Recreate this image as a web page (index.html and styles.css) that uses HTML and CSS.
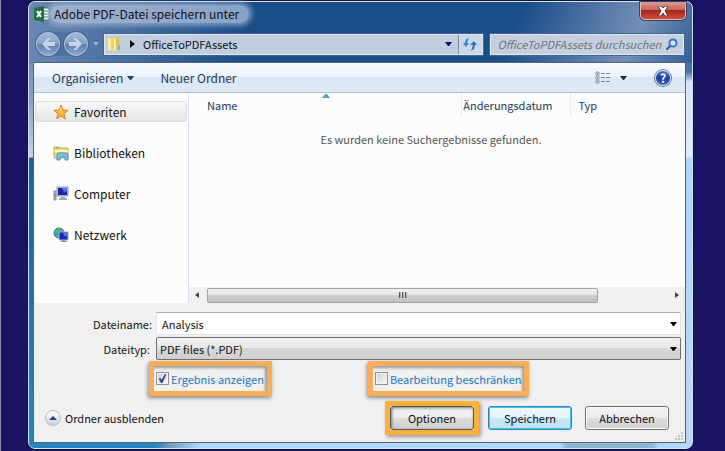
FILE: index.html
```html
<!DOCTYPE html>
<html lang="de">
<head>
    <meta charset="UTF-8">
    <meta name="viewport" content="width=device-width, initial-scale=1.0">
    <title>Adobe PDF-Datei speichern unter</title>
    <link rel="stylesheet" href="styles.css">
</head>
<body>
    <div class="window">
        <header class="titlebar">
            <svg class="app-icon" width="16" height="16" viewBox="0 0 16 16">
                <path d="M9 2h6v12H9z" fill="#fff" stroke="#2a7a4b"/>
                <path d="M11 4v2M11 7v2M11 10v2M13 4v2M13 7v2M13 10v2" stroke="#2a7a4b"/>
                <path d="M0 2l10-2v16L0 14z" fill="#1e7145"/>
                <path d="M3 5l4 6M7 5l-4 6" stroke="#fff" stroke-width="2"/>
            </svg>
            <h1 class="title">Adobe PDF-Datei speichern unter</h1>
            <button class="close" type="button" aria-label="Schließen">
                <svg width="12" height="10" viewBox="0 0 12 10">
                    <path d="M1 0h3l2 2 2-2h3L8 5l3 5H8L6 7l-2 3H1l3-5z" fill="#fff" stroke="#5b3c44"/>
                </svg>
            </button>
        </header>

        <nav class="navbar">
            <div class="history">
                <button class="round" type="button" aria-label="Zurück">
                    <svg width="16" height="14" viewBox="0 0 16 14"><path d="M8 1L2 7l6 6h3L7 9h8V5H7l4-4z" fill="#c6d5ea"/></svg>
                </button>
                <button class="round" type="button" aria-label="Vorwärts">
                    <svg width="16" height="14" viewBox="0 0 16 14"><path d="M8 1l6 6-6 6H5l4-4H1V5h8L5 1z" fill="#c6d5ea"/></svg>
                </button>
            </div>
            <svg class="history-arrow" width="6" height="4" viewBox="0 0 6 4"><path d="M0 0h6L3 4z" fill="#9db6da"/></svg>
            <div class="address">
                <button class="crumb" type="button">
                    <svg width="14" height="16" viewBox="0 0 14 16">
                        <path d="M1 2l4-1 3 1v13l-5-1-2-1z" fill="#f1d56c"/>
                        <path d="M1 2l3 1v12l-3-2z" fill="#fbeaa0"/>
                        <path d="M7 2l4-1 1 1v12H7z" fill="#e5bd49"/>
                        <path d="M7 3l2-1v13l-2-1z" fill="#fff0ac"/>
                        <path d="M11 9h2v5h-2z" fill="#7fb2dd"/>
                    </svg>
                    <svg class="crumb-arrow" width="5" height="8" viewBox="0 0 5 8"><path d="M0 0l5 4-5 4z" fill="#111"/></svg>
                    <span>OfficeToPDFAssets</span>
                </button>
                <button class="address-drop" type="button" aria-label="Verlauf">
                    <svg width="7" height="4" viewBox="0 0 7 4"><path d="M0 0h7L4 4H3z" fill="#0c0c66"/></svg>
                </button>
                <button class="refresh" type="button" aria-label="Aktualisieren">
                    <svg width="14" height="13" viewBox="0 0 14 13">
                        <path d="M6 0L3 1 2 5H0l3 4 3-4H4l1-3z" fill="#2e8ad2"/>
                        <path d="M8 13l3-2 1-4h2l-3-4-4 4h3l-1 3z" fill="#3572c0"/>
                    </svg>
                </button>
            </div>
            <div class="search">
                <input class="search-input" type="text" aria-label="Suchen" placeholder="OfficeToPDFAssets durchsuchen">
                <svg width="12" height="12" viewBox="0 0 12 12">
                    <path d="M5 7l-4 4" stroke="#2456ae" stroke-width="2" stroke-linecap="round"/>
                    <circle cx="7" cy="5" r="3.5" fill="#d9ebfa" stroke="#3479cc" stroke-width="2"/>
                </svg>
            </div>
        </nav>

        <main class="panel">
            <div class="toolbar">
                <button class="tool" type="button">Organisieren
                    <svg width="7" height="4" viewBox="0 0 7 4"><path d="M0 0h7L4 4H3z" fill="#1c4668"/></svg>
                </button>
                <button class="tool" type="button">Neuer Ordner</button>
                <div class="tool-right">
                    <button class="tool view" type="button" aria-label="Ansicht">
                        <svg width="15" height="13" viewBox="0 0 15 13">
                            <path d="M1 1h3v3H1zM1 5h3v3H1zM1 9h3v3H1z" fill="#fff" stroke="#8d98ac"/>
                            <path d="M2 2h1v1H2zM2 10h1v1H2z" fill="#5470a0"/>
                            <path d="M2 6h1v1H2z" fill="#e2413c"/>
                            <path d="M6 2.500h4M11 2.500h4M6 6.500h4M11 6.500h4M6 10.500h4M11 10.500h4" stroke="#78859f"/>
                        </svg>
                        <svg width="7" height="4" viewBox="0 0 7 4"><path d="M0 0h7L4 4H3z" fill="#15394f"/></svg>
                    </button>
                    <button class="help" type="button" aria-label="Hilfe">?</button>
                </div>
            </div>

            <div class="browser">
                <div class="sidebar">
                    <a class="place selected" href="#">
                        <svg width="16" height="16" viewBox="0 0 16 16">
                            <path d="M8 1l2 5 5 .4-4 3.400 1.400 5L8 12l-4.400 2.800L5 9.800 1 6.400 6 6z" fill="#fdb53e" stroke="#e07f2a" stroke-linejoin="round"/>
                            <path d="M8 3l1 4H6z" fill="#ffe79a"/>
                        </svg>
                        Favoriten
                    </a>
                    <a class="place" href="#">
                        <svg width="16" height="16" viewBox="0 0 16 16">
                            <path d="M1 2h5l1 1h8v10H1z" fill="#efd575" stroke="#cfae50"/>
                            <path d="M2 5h13v2H2z" fill="#fff4bd"/>
                            <path d="M3 3h3" stroke="#5cb050"/>
                            <path d="M4 15V10q0-2 2-2h6q3 0 3 3v4h-3v-2q0-1-1-1H8q-1 0-1 1v2z" fill="#76c2e8" stroke="#4693c4"/>
                        </svg>
                        Bibliotheken
                    </a>
                    <a class="place" href="#">
                        <svg width="16" height="16" viewBox="0 0 16 16">
                            <path d="M1 5h2v9H1z" fill="#b8bcc2" stroke="#858a90"/>
                            <path d="M2 8v3" stroke="#3b9f48"/>
                            <path d="M4 1h11v9H4z" fill="#c9ced8" stroke="#9096a6"/>
                            <path d="M5 2h9v7H5z" fill="#1620a8"/>
                            <path d="M9 2h5v3l-3 2z" fill="#4a73e6"/>
                            <path d="M8 11h4v1h2v2H6v-2h2z" fill="#a3a8b1"/>
                        </svg>
                        Computer
                    </a>
                    <a class="place" href="#">
                        <svg width="16" height="16" viewBox="0 0 16 16">
                            <circle cx="6" cy="6" r="5" fill="#3598d8" stroke="#2a75a8"/>
                            <path d="M2 4l3-3 3 1-2 3-3 1zM3 8l3-1 1 3-2 1z" fill="#58bd55"/>
                            <path d="M6 5h9v8H6z" fill="#1926b8" stroke="#aab2c6"/>
                            <path d="M10 6h4v3l-2 1z" fill="#4b78e8"/>
                            <path d="M9 13h3v1h2v1H8v-1h1z" fill="#8b93a5"/>
                        </svg>
                        Netzwerk
                    </a>
                </div>
                <div class="files">
                    <table class="columns">
                        <thead>
                            <tr>
                                <th class="col-name">Name
                                    <svg class="sort" width="8" height="4" viewBox="0 0 8 4"><path d="M0 4l3-4h2l3 4z" fill="#5b9fc0"/></svg>
                                </th>
                                <th class="col-date">Änderungsdatum</th>
                                <th class="col-type">Typ</th>
                            </tr>
                        </thead>
                        <tbody>
                            <tr>
                                <td class="empty" colspan="3">Es wurden keine Suchergebnisse gefunden.</td>
                            </tr>
                        </tbody>
                    </table>
                    <div class="scrollbar">
                        <svg width="4" height="6" viewBox="0 0 4 6"><path d="M4 0v6L0 3z" fill="#444"/></svg>
                        <div class="track">
                            <div class="thumb"><i></i><i></i><i></i></div>
                        </div>
                        <svg width="4" height="6" viewBox="0 0 4 6"><path d="M0 0l4 3-4 3z" fill="#444"/></svg>
                    </div>
                </div>
            </div>

            <form class="footer">
                <div class="fields">
                    <label for="filename">Dateiname:</label>
                    <div class="combo">
                        <input class="field" type="text" id="filename" value="Analysis">
                        <svg class="combo-arrow" width="7" height="4" viewBox="0 0 7 4"><path d="M0 0h7L4 4H3z"/></svg>
                    </div>
                    <label class="type-label" for="filetype">Dateityp:</label>
                    <div class="combo">
                        <select class="field type" id="filetype">
                            <option>PDF files (*.PDF)</option>
                        </select>
                        <svg class="combo-arrow" width="7" height="4" viewBox="0 0 7 4"><path d="M0 0h7L4 4H3z"/></svg>
                    </div>
                </div>

                <div class="options">
                    <label class="option">
                        <input class="check" type="checkbox" checked>
                        Ergebnis anzeigen
                    </label>
                    <label class="option">
                        <input class="check" type="checkbox">
                        Bearbeitung beschränken
                    </label>
                </div>

                <div class="actions">
                    <button class="hide-folders" type="button">
                        <span class="fold">
                            <svg width="8" height="4" viewBox="0 0 8 4"><path d="M0 4l4-4 4 4z" fill="#27418f"/></svg>
                        </span>
                        Ordner ausblenden
                    </button>
                    <div class="highlight">
                        <button class="btn pressed" type="button">Optionen</button>
                    </div>
                    <button class="btn primary" type="submit">Speichern</button>
                    <button class="btn cancel" type="button">Abbrechen</button>
                </div>
                <svg class="grip" width="9" height="9" viewBox="0 0 9 9">
                    <path d="M7 0h2v2H7zM7 3h2v2H7zM7 6h2v2H7zM4 3h2v2H4zM4 6h2v2H4zM1 6h2v2H1z" fill="#c4c4c4"/>
                </svg>
            </form>
        </main>
    </div>
</body>
</html>
```

FILE: styles.css
```css
* {
    box-sizing: border-box;
}

body {
    margin: 0;
    padding: 1px 32px 0 27px;
    border-left: 1px solid #8f8daa;
    min-height: 100vh;
    background-color: #1b1464;
    font-family: "Noto Sans CJK SC", "Noto Sans", sans-serif;
    font-size: 12px;
    line-height: 18px;
    color: #111;
}

button,
input,
select {
    margin: 0;
    padding: 0;
    border: none;
    background: none;
    font: inherit;
    color: inherit;
}

svg {
    flex: none;
}

.window {
    padding: 0 6px 5px 4px;
    border: 1px solid #d5e4f4;
    border-radius: 7px;
    background:
        linear-gradient(to right, rgba(126, 150, 190, 0.8), rgba(126, 150, 190, 0) 32%) 0 0 / 100% 61px no-repeat,
        linear-gradient(115deg, rgba(126, 150, 190, 0) 72%, rgba(126, 150, 190, 0.9) 90%, rgba(60, 105, 160, 0.6)) 0 0 / 100% 61px no-repeat,
        linear-gradient(#1b4e88, #1b4e88) 0 0 / 100% 61px no-repeat,
        linear-gradient(#557eaf, #7f9cc4 90px, #c3d3e8 155px, #1d62a0 156px, #2785bf) 0 0 / 50% 98% no-repeat,
        linear-gradient(#3a6598, #4a74a8 70px, #d3e6fa 80px, #e0ecfa 155px, #aed5fb 156px, #b5d7fa) 100% 0 / 50% 98% no-repeat,
        linear-gradient(to right, #2684bd 19%, #6f9ab9 21%, #b5d7fa 26%, #b5d7fa 80%, #8fb5cf 81%, #8fb5cf 94%, #b5d7fa 95%);
    box-shadow: 0 0 0 1px #0b1638;
}

.titlebar {
    display: flex;
    align-items: center;
    height: 24px;
    padding-left: 1px;
}

.title {
    margin: 0;
    padding: 0 10px 0 4px;
    border-radius: 10px;
    background-color: rgba(175, 192, 222, 0.75);
    box-shadow: 0 0 5px 3px rgba(175, 192, 222, 0.6);
    font-size: 12px;
    font-weight: normal;
}

.close {
    display: flex;
    align-items: center;
    justify-content: center;
    align-self: flex-start;
    width: 46px;
    height: 18px;
    margin-left: auto;
    border: 1px solid #e3b9b8;
    border-top: none;
    border-radius: 0 0 5px 5px;
    background: linear-gradient(#d79b94, #c4635a 48%, #a92718 50%, #cc4f3c);
    box-shadow: 0 0 0 1px #3b3f60;
}

.navbar {
    display: flex;
    align-items: center;
    height: 36px;
    padding: 0 2px 0 3px;
}

.history {
    display: flex;
    gap: 4px;
    border-radius: 12px;
    background-color: rgba(60, 95, 150, 0.4);
}

.round {
    display: flex;
    align-items: center;
    justify-content: center;
    width: 24px;
    height: 24px;
    border: 1px solid #b5c6df;
    border-radius: 50%;
    background: linear-gradient(#a4b7d3, #8ba2c6 48%, #5f7dab 50%, #8ba7cd);
    box-shadow: 0 0 0 1px #46648f;
}

.history-arrow {
    margin: 0 5px;
}

.address,
.search {
    display: flex;
    align-items: center;
    height: 21px;
    border: 1px solid #dfe8f2;
    background-color: #c0cedf;
    box-shadow: 0 0 0 1px #42648f;
}

.address {
    flex: 1;
    margin-right: 7px;
}

.crumb {
    display: flex;
    align-items: center;
    flex: 1;
    padding-left: 2px;
    font-size: 11px;
}

.crumb-arrow {
    margin: 0 8px 0 9px;
}

.address-drop {
    display: flex;
    align-items: center;
    justify-content: center;
    width: 19px;
    height: 19px;
}

.refresh {
    display: flex;
    align-items: center;
    justify-content: center;
    width: 24px;
    height: 19px;
    border-left: 1px solid #7d8b9f;
    background-color: #cbd8e8;
}

.search {
    width: 30%;
    padding: 0 5px 0 7px;
    background-color: #c6cfdd;
}

.search-input {
    flex: 1;
    min-width: 0;
    height: 19px;
    font-size: 11px;
    font-style: italic;
}

.search-input::placeholder {
    color: #6e737c;
    opacity: 1;
}

.panel {
    border: 1px solid #4a6580;
    background-color: #f0f0f0;
}

.toolbar {
    display: flex;
    align-items: center;
    gap: 26px;
    height: 30px;
    padding: 0 14px 0 18px;
    border-bottom: 1px solid #b4c1d5;
    background: linear-gradient(#fafcff, #eaf2fc 48%, #dce6f4 50%, #dde8f5);
}

.tool {
    display: flex;
    align-items: center;
    gap: 4px;
    color: #1e395b;
}

.tool-right {
    display: flex;
    align-items: center;
    gap: 28px;
    margin-left: auto;
}

.view {
    gap: 10px;
}

.help {
    width: 16px;
    height: 16px;
    border: 1px solid #cfd6e6;
    border-radius: 50%;
    background: linear-gradient(#5a7cd2, #1c3a9f 50%, #3f69cf);
    box-shadow: 0 0 0 1px #6a7590;
    font-weight: bold;
    line-height: 14px;
    color: #fff;
}

.browser {
    display: flex;
    height: 210px;
    background-color: #fcfcfc;
}

.sidebar {
    display: flex;
    flex-direction: column;
    flex: none;
    gap: 20px;
    width: 155px;
    padding: 8px 1px 0 1px;
    border-right: 1px solid #d2e0f2;
}

.place {
    display: flex;
    align-items: center;
    gap: 5px;
    height: 21px;
    padding-left: 17px;
    border: 1px solid transparent;
    border-radius: 3px;
    color: #111;
    text-decoration: none;
}

.selected {
    border-color: #dcdcdc;
    background: linear-gradient(#f8f8f8, #e4e4e4);
}

.files {
    display: flex;
    flex-direction: column;
    justify-content: space-between;
    flex: 1;
}

.columns {
    width: 100%;
    border-collapse: collapse;
    table-layout: fixed;
    font-size: 11px;
}

.columns th {
    position: relative;
    height: 24px;
    padding: 0 0 0 7px;
    border-right: 1px solid #e3ebf6;
    font-weight: normal;
    text-align: left;
    color: #1e395b;
}

.columns .col-name {
    width: 55%;
    padding-left: 18px;
}

.columns .col-date {
    width: 22%;
    padding-left: 1px;
}

.columns .col-type {
    border-right: none;
}

.sort {
    position: absolute;
    top: 1px;
    left: 49%;
}

.columns .empty {
    padding: 13px 12px 0 0;
    text-align: center;
    color: #555;
}

.scrollbar {
    display: flex;
    align-items: center;
    gap: 8px;
    height: 16px;
    padding: 0 6px;
    background-color: #f0f0f0;
}

.track {
    flex: 1;
}

.thumb {
    display: flex;
    align-items: center;
    justify-content: center;
    gap: 1px;
    width: 85%;
    height: 15px;
    border: 1px solid #a3a3a3;
    border-radius: 2px;
    background: linear-gradient(#f3f3f3, #e2e2e2 48%, #cfcfcf 50%, #c0c0c0);
}

.thumb i {
    width: 2px;
    height: 6px;
    border-left: 1px solid #555;
    background-color: #aaa;
}

.footer {
    position: relative;
    padding: 9px 4px 7px 9px;
    font-size: 11px;
}

.fields {
    display: grid;
    grid-template-columns: 109px 1fr;
    gap: 2px 4px;
    align-items: center;
    text-align: right;
}

.type-label {
    padding-right: 2px;
}

.combo {
    position: relative;
}

.field {
    display: block;
    width: 100%;
    height: 23px;
    padding: 0 20px 0 5px;
    border: 1px solid #e3e3e3;
    border-top-color: #abadb3;
    background-color: #fff;
}

.type {
    appearance: none;
    padding-left: 3px;
    border: 1px solid #707070;
    border-radius: 2px;
    background: linear-gradient(#f2f2f2, #e8e8e8 48%, #d8d8d8 50%, #cfcfcf);
}

.combo-arrow {
    position: absolute;
    top: 10px;
    right: 4px;
}

.options {
    display: flex;
    gap: 96px;
    padding: 1px 0 0 106px;
}

.option {
    display: flex;
    align-items: center;
    gap: 2px;
    height: 35px;
    padding: 0 3px 0 2px;
    border: 5px solid #f9ad5b;
    box-shadow: -1px 2px 4px #888, inset -2px 2px 3px #999;
    color: #1a78c2;
}

.check {
    display: flex;
    align-items: center;
    justify-content: center;
    appearance: none;
    width: 13px;
    height: 13px;
    border: 1px solid #8e8f8f;
    background: linear-gradient(135deg, #c9ced4, #fafafa);
    box-shadow: inset 0 0 0 1px #f4f4f4;
}

.check:checked::after {
    content: "";
    width: 8px;
    height: 9px;
    background-color: #334c9b;
    clip-path: polygon(0 50%, 25% 45%, 40% 65%, 80% 0, 100% 0, 50% 100%, 30% 100%);
}

.actions {
    display: flex;
    align-items: center;
    padding: 5px 12px 0 2px;
}

.hide-folders {
    display: flex;
    align-items: center;
    gap: 4px;
    margin-right: auto;
}

.fold {
    display: flex;
    align-items: center;
    justify-content: center;
    width: 16px;
    height: 16px;
    border: 1px solid #b5b9c4;
    border-radius: 50%;
    background: linear-gradient(#fff, #ccd4e3);
}

.highlight {
    margin-right: 9px;
    border: 5px solid #fbb03b;
    box-shadow: 2px 2px 4px #999;
}

.btn {
    width: 84px;
    height: 24px;
    border: 1px solid #707070;
    border-radius: 3px;
    background: linear-gradient(#f3f3f3, #ebebeb 48%, #dddddd 50%, #cfcfcf);
    box-shadow: inset 0 0 0 1px #f8f8f8;
}

.pressed {
    display: block;
    border-color: #555;
    box-shadow: inset 1px 1px 3px #777;
}

.primary {
    margin-right: 13px;
    border-color: #3c7fb1;
    background: linear-gradient(#f0f8fc, #e3f2fa 48%, #c9e6f5 50%, #bfe2f4);
    box-shadow: inset 0 0 0 1px #38c8f4;
}

.grip {
    position: absolute;
    right: 2px;
    bottom: 1px;
}
```
